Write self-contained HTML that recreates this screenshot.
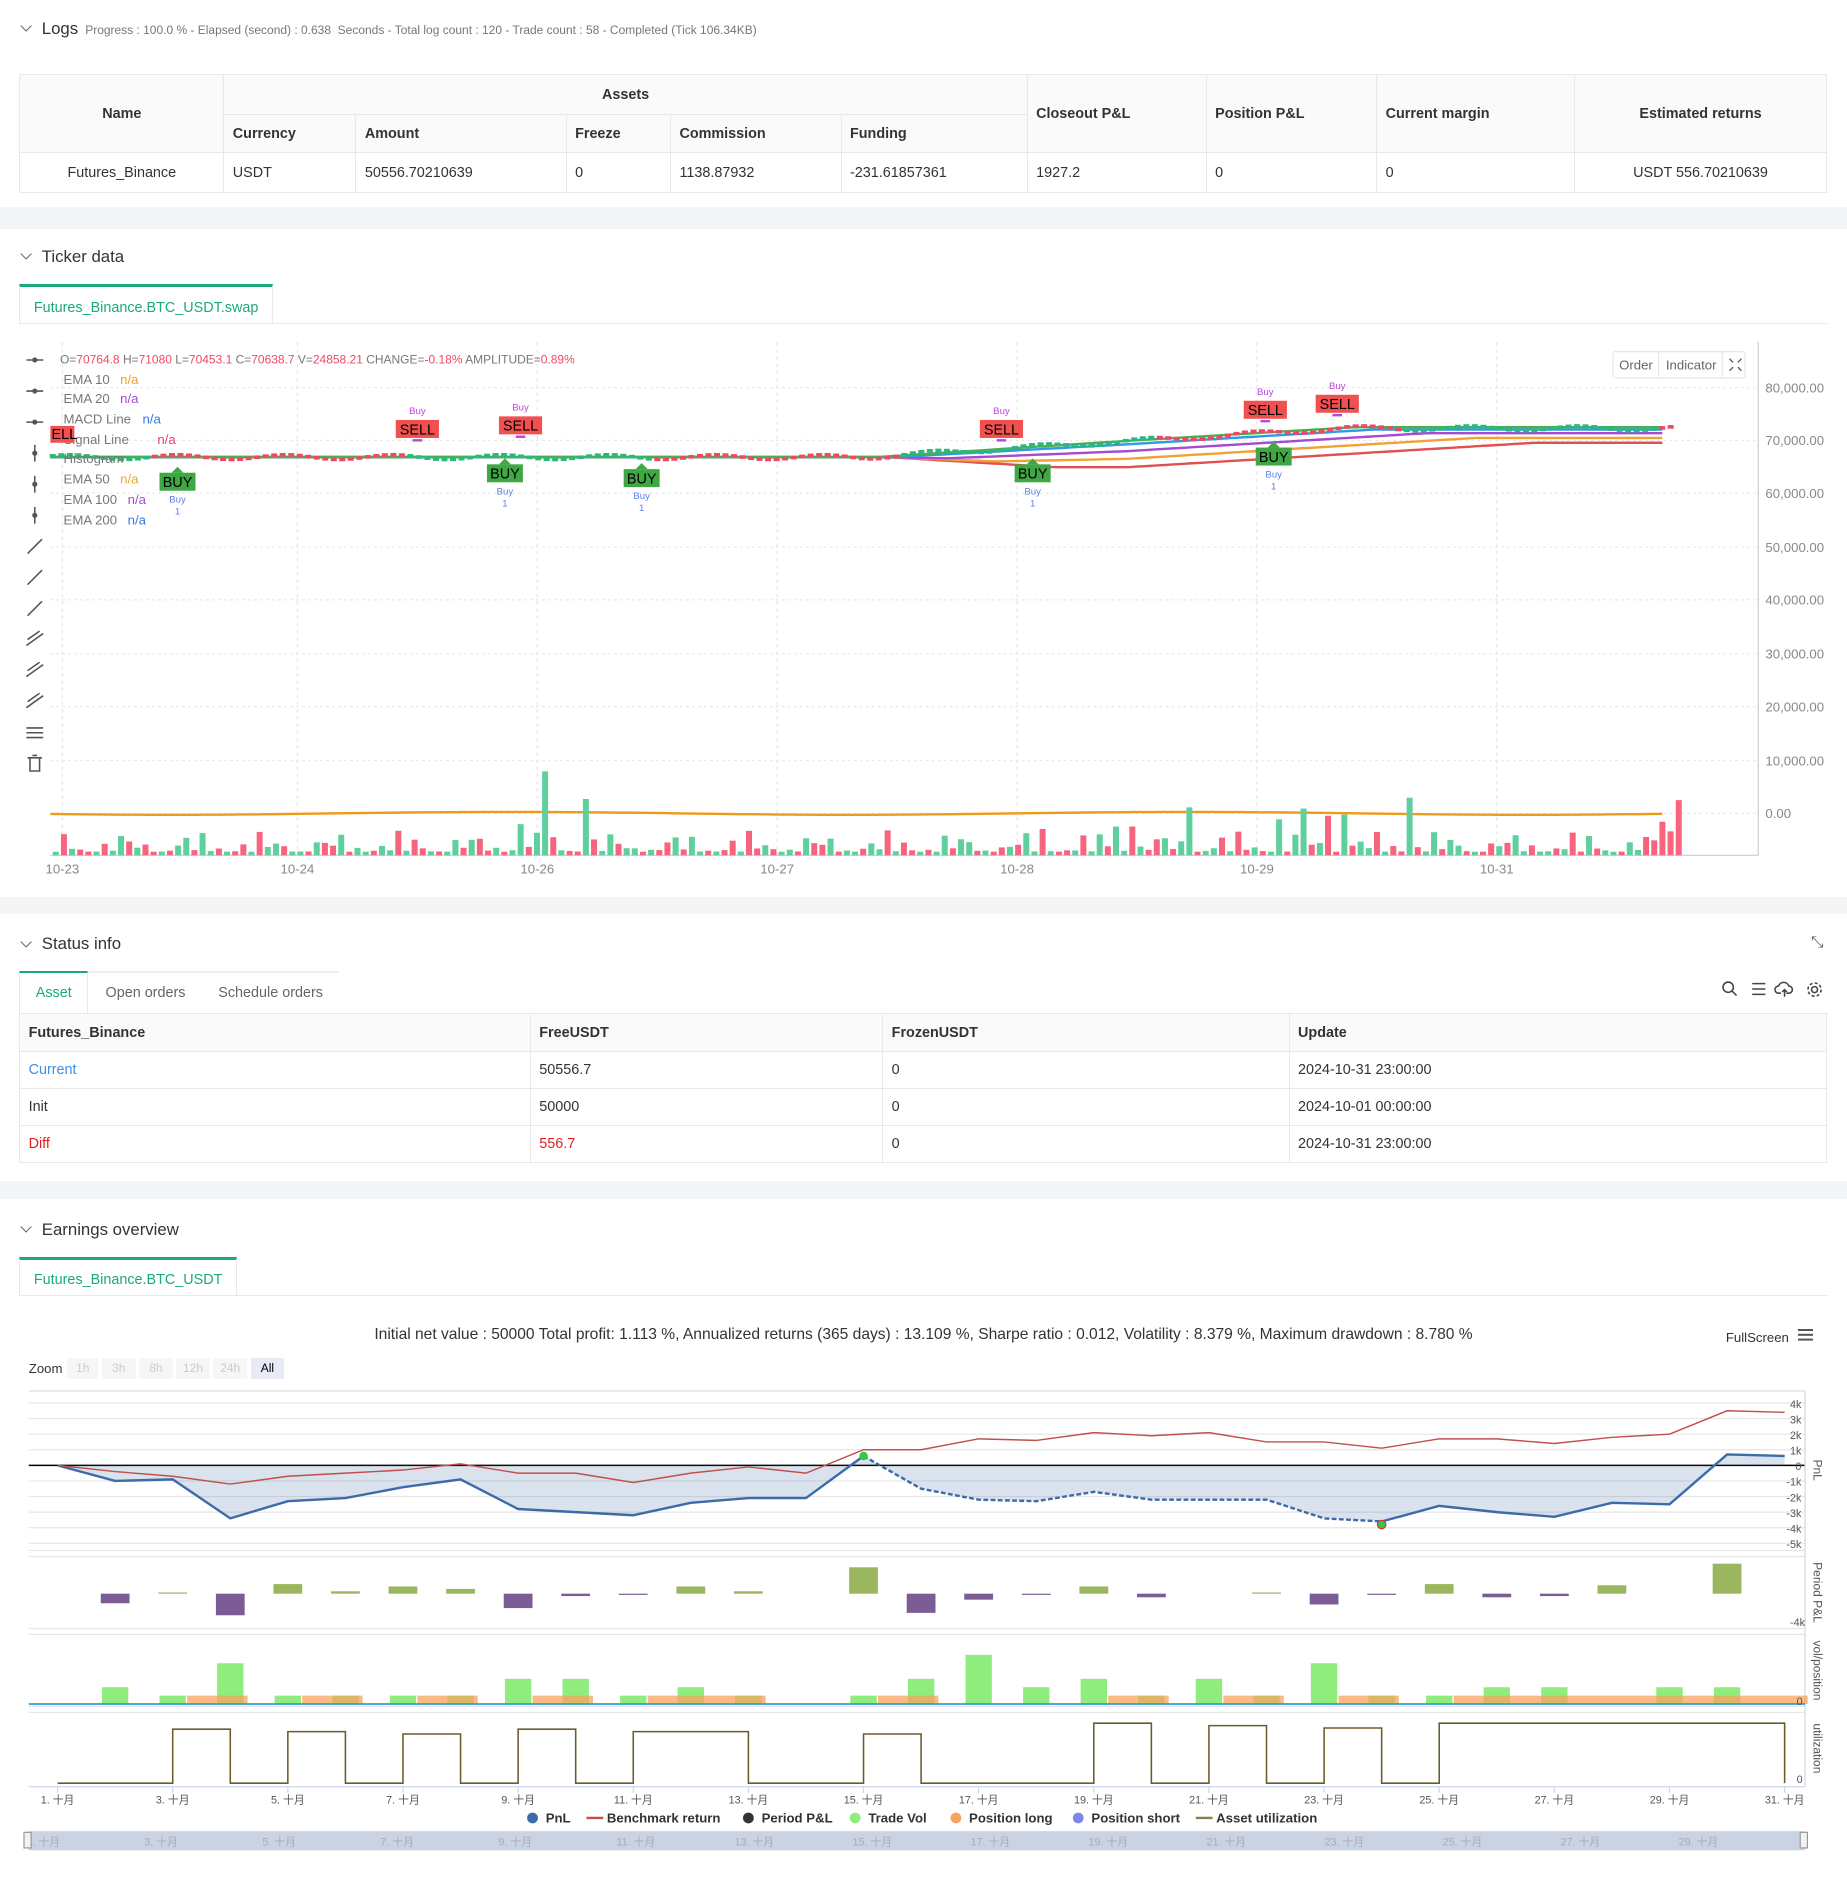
<!DOCTYPE html>
<html><head><meta charset="utf-8"><style>
html,body{margin:0;padding:0;background:#fff;overflow:hidden;width:1847px;height:1880px}
#w{position:relative;width:1540px;height:1568px;zoom:1.19935;font-family:"Liberation Sans","Noto Sans CJK SC",sans-serif;color:#333;font-size:12px}
.a{position:absolute}
.band{position:absolute;left:0;width:1540px;background:#f4f5f7}
.h{position:absolute;left:16px;font-size:14px;color:#333}
.h:before{content:"";display:inline-block;width:6px;height:6px;border-right:1.2px solid #666;border-bottom:1.2px solid #666;transform:rotate(45deg);margin:0 10px 3px 2px}
table{border-collapse:collapse;position:absolute;font-size:12px}
td,th{border:1px solid #e8e8e8;padding:0 7px;text-align:left}
th{background:#fafafa;font-weight:bold;color:#333}
.tab{position:absolute;border:1px solid #e8e8e8;border-bottom:none;border-top:3px solid #1aaa7d;color:#1aaa7d;font-size:12px;text-align:center;background:#fff}
svg text{font-family:"Liberation Sans","Noto Sans CJK SC",sans-serif}
</style></head><body><div id="w">

<div class="h" style="top:16px">Logs <span style="font-size:10px;color:#777;margin-left:2px">Progress : 100.0 % - Elapsed (second) : 0.638 &nbsp;Seconds - Total log count : 120 - Trade count : 58 - Completed (Tick 106.34KB)</span></div>
<table style="left:16px;top:62px;width:1507px">
<tr style="height:33px"><th rowspan="2" style="text-align:center;width:155px">Name</th><th colspan="5" style="text-align:center">Assets</th><th rowspan="2" style="width:134px">Closeout P&amp;L</th><th rowspan="2" style="width:127px">Position P&amp;L</th><th rowspan="2" style="width:150px">Current margin</th><th rowspan="2" style="text-align:center;width:194px">Estimated returns</th></tr>
<tr style="height:32px"><th style="width:95px">Currency</th><th style="width:160px">Amount</th><th style="width:72px">Freeze</th><th style="width:127px">Commission</th><th style="width:140px">Funding</th></tr>
<tr style="height:33px"><td style="text-align:center">Futures_Binance</td><td>USDT</td><td>50556.70210639</td><td>0</td><td>1138.87932</td><td>-231.61857361</td><td>1927.2</td><td>0</td><td>0</td><td style="text-align:center">USDT 556.70210639</td></tr>
</table>
<div class="band" style="top:173px;height:18px"></div>

<div class="h" style="top:206px">Ticker data</div>
<div class="tab" style="left:16px;top:237px;width:210px;height:31px;line-height:36px">Futures_Binance.BTC_USDT.swap</div>
<div class="a" style="left:16px;top:269px;width:1507px;border-top:1px solid #e8e8e8"></div>

<svg class="a" style="left:0;top:280px" width="1540" height="470" id="main"></svg>

<div class="band" style="top:748px;height:14px"></div>

<div class="h" style="top:779px">Status info</div>
<div class="a" style="left:1510px;top:779px;font-size:13px;color:#555">⤡</div>
<div class="a" style="left:16px;top:810px;width:267px;border-top:2px solid #eee"></div>
<div class="tab" style="left:16px;top:810px;width:56px;height:34px;line-height:34px;border-top-width:2px">Asset</div>
<div class="a" style="left:88px;top:821px;color:#666;font-size:12px">Open orders</div>
<div class="a" style="left:182px;top:821px;color:#666;font-size:12px">Schedule orders</div>
<svg class="a" style="left:1435px;top:817px" width="90" height="16" stroke="#444" fill="none" stroke-width="1.3">
<circle cx="6" cy="6" r="4.3"/><path d="M9 9l4 4"/>
<path d="M26 3h11M26 7.5h11M26 12h11"/>
<path d="M50 11h-2a3 3 0 0 1 0-6 4.5 4.5 0 0 1 8.5 0 3 3 0 0 1 0 6h-2M53 8v6M51 10l2-2 2 2"/>
<circle cx="78" cy="8" r="2.5"/><circle cx="78" cy="8" r="5.5" stroke-dasharray="2.5 1.8"/>
</svg>
<table style="left:16px;top:845px;width:1507px">
<tr style="height:31px"><th style="width:411px">Futures_Binance</th><th style="width:279px">FreeUSDT</th><th style="width:324px">FrozenUSDT</th><th>Update</th></tr>
<tr style="height:31px"><td style="color:#3d8ee8">Current</td><td>50556.7</td><td>0</td><td>2024-10-31 23:00:00</td></tr>
<tr style="height:31px"><td>Init</td><td>50000</td><td>0</td><td>2024-10-01 00:00:00</td></tr>
<tr style="height:31px"><td style="color:#e02020">Diff</td><td style="color:#e02020">556.7</td><td>0</td><td>2024-10-31 23:00:00</td></tr>
</table>
<div class="band" style="top:985px;height:15px"></div>

<div class="h" style="top:1017px">Earnings overview</div>
<div class="tab" style="left:16px;top:1048px;width:180px;height:30px;line-height:35px">Futures_Binance.BTC_USDT</div>
<div class="a" style="left:16px;top:1080px;width:1507px;border-top:1px solid #e8e8e8"></div>
<div class="a" style="left:0;width:1540px;top:1106px;text-align:center;font-size:13px;color:#333">Initial net value : 50000 Total profit: 1.113 %, Annualized returns (365 days) : 13.109 %, Sharpe ratio : 0.012, Volatility : 8.379 %, Maximum drawdown : 8.780 %</div>
<div class="a" style="left:1439px;top:1109px;font-size:11px;color:#333">FullScreen</div>
<div class="a" style="left:1499px;top:1108px;width:13px;height:2px;background:#555;box-shadow:0 4px #555,0 8px #555"></div>
<div class="a" style="left:24px;top:1135px;font-size:11px;color:#333">Zoom</div>
<div class="a" style="left:56px;top:1132px;font-size:10px;color:#ccc;display:flex;gap:3px">
<span style="background:#f6f6f6;width:26px;height:18px;line-height:18px;text-align:center">1h</span><span style="background:#f6f6f6;width:28px;height:18px;line-height:18px;text-align:center">3h</span><span style="background:#f6f6f6;width:28px;height:18px;line-height:18px;text-align:center">8h</span><span style="background:#f6f6f6;width:28px;height:18px;line-height:18px;text-align:center">12h</span><span style="background:#f6f6f6;width:28px;height:18px;line-height:18px;text-align:center">24h</span><span style="background:#e6ebf5;width:28px;height:18px;line-height:18px;text-align:center;color:#000">All</span></div>

<svg class="a" style="left:0;top:1150px" width="1540" height="418" id="earn"></svg>

</div>
<script>
var NS="http://www.w3.org/2000/svg";
function el(p,t,a,txt){var e=document.createElementNS(NS,t);for(var k in a)e.setAttribute(k,a[k]);if(txt!=null)e.textContent=txt;p.appendChild(e);return e;}
var m=document.getElementById('main');var o=280;
var ylab=[["80,000.00",323],["70,000.00",367],["60,000.00",411],["50,000.00",456],["40,000.00",500],["30,000.00",545],["20,000.00",589],["10,000.00",634],["0.00",678]];
ylab.forEach(function(l){el(m,'line',{x1:42,x2:1466,y1:l[1]-o,y2:l[1]-o,stroke:'#e6e6e6','stroke-dasharray':'2 3'});el(m,'text',{x:1472,y:l[1]-o+4,'font-size':11,fill:'#888'},l[0]);});
var xl=[["10-23",52],["10-24",248],["10-26",448],["10-27",648],["10-28",848],["10-29",1048],["10-31",1248]];
xl.forEach(function(l){el(m,'line',{x1:l[1],x2:l[1],y1:5,y2:433,stroke:'#e6e6e6','stroke-dasharray':'3 3'});el(m,'text',{x:l[1],y:724-o+4,'font-size':11,fill:'#888','text-anchor':'middle'},l[0]);});
el(m,'line',{x1:1466,x2:1466,y1:5,y2:433,stroke:'#ccc'});
el(m,'line',{x1:42,x2:1466,y1:433,y2:433,stroke:'#ccc'});
for(var i=0;i<14;i++){var y=300+i*25.9-o;var g=el(m,'g',{stroke:'#555','stroke-width':1.3,fill:'#555'});
 if(i<3){el(g,'line',{x1:22,x2:36,y1:y,y2:y});el(g,'circle',{cx:29,cy:y,r:1.5});}
 else if(i<6){el(g,'line',{x1:29,x2:29,y1:y-7,y2:y+7});el(g,'circle',{cx:29,cy:y,r:1.5});}
 else if(i<9){el(g,'line',{x1:23,x2:35,y1:y+6,y2:y-6});}
 else if(i<12){el(g,'line',{x1:22,x2:36,y1:y+5,y2:y-5});el(g,'line',{x1:23,x2:33,y1:y,y2:y-7});}
 else if(i==12){el(g,'path',{d:'M22 '+(y-4)+'h14M22 '+y+'h14M22 '+(y+4)+'h14',fill:'none'});}
 else {el(g,'path',{d:'M23 '+(y-5)+'h12M25 '+(y-5)+'v11h8v-11M27 '+(y-7)+'h4',fill:'none'});}
}
function py(x){if(x<720)return 381;if(x<1120)return 381-(x-720)/400*24*(1-0.3*Math.sin((x-720)/400*Math.PI)*0);return 357;}
var emas=[['#e05050',160,12],['#f2a134',110,8],['#a64bd0',70,4],['#2c9ae8',25,1],['#4cae4c',10,-1]];
emas.forEach(function(e){var d='';for(var x=42;x<=1390;x+=6){var yy=py(Math.max(42,x-e[1]));if(x>740)yy+=e[2]*Math.min(1,(x-740)/200);d+=(x==42?'M':'L')+x+' '+(yy-o).toFixed(1);}el(m,'path',{d:d,stroke:e[0],fill:'none','stroke-width':2});});
for(var x=44;x<1400;x+=7.1){var yy=py(x)-o+Math.sin(x*1.7)*2;var up=Math.sin(x*0.9)>0;el(m,'rect',{x:x-2.5,y:yy-1.5,width:5,height:3,fill:up?'#26b980':'#f04864'});}
var d='';for(var x=42;x<=1390;x+=8){d+=(x==42?'M':'L')+x+' '+(678-o+Math.sin(x/90)*1.2).toFixed(1);}el(m,'path',{d:d,stroke:'#f09a1a',fill:'none','stroke-width':2});
for(var i=0;i<=199;i++){var x=44+i*6.8;var s=Math.abs(Math.sin(i*1.31)*Math.cos(i*0.37));var h=3+s*s*18;
 if(i==60)h=70;if(i==65)h=47;if(i==166)h=48;if(i==139)h=40;if(i==199)h=46;if(i==197)h=28;if(i==198)h=20;if(i==150||i==153||i==156)h=30+i%5*3;if(i==158)h=34;if(i==130||i==132)h=24;if(i==121)h=22;if(i==57)h=26;
 var red=Math.sin(i*2.3)>0.1;if(i>=196)red=true;el(m,'rect',{x:x,y:433-h,width:5,height:h,fill:red?'#f7647e':'#5fcf9e'});}
el(m,'text',{x:50,y:303-o,'font-size':10,fill:'#777'}).innerHTML='O=<tspan fill="#f04864">70764.8</tspan> H=<tspan fill="#f04864">71080</tspan> L=<tspan fill="#f04864">70453.1</tspan> C=<tspan fill="#f04864">70638.7</tspan> V=<tspan fill="#f04864">24858.21</tspan> CHANGE=<tspan fill="#f04864">-0.18%</tspan> AMPLITUDE=<tspan fill="#f04864">0.89%</tspan>';
var leg=[["EMA 10","#f2a134",316],["EMA 20","#a64bd0",332],["MACD Line","#2c7ae8",349],["Signal Line","#e8407a",366],["Histogram","",382],["EMA 50","#f2a134",399],["EMA 100","#a64bd0",416],["EMA 200","#2c7ae8",433]];
leg.forEach(function(l){el(m,'text',{x:53,y:l[2]-o+4,'font-size':11,fill:'#777'},l[0]);if(l[1])el(m,'text',{x:53+l[0].length*6.2+10,y:l[2]-o+4,'font-size':11,fill:l[1]},'n/a');});
function sell(x,y){el(m,'text',{x:x,y:y-13-o,'font-size':8,fill:'#c040e0','text-anchor':'middle'},'Buy');el(m,'rect',{x:x-18,y:y-8-o,width:36,height:15,fill:'#f05050'});el(m,'text',{x:x,y:y+4-o,'font-size':12,fill:'#000','text-anchor':'middle'},'SELL');el(m,'rect',{x:x-4,y:y+8-o,width:8,height:2,fill:'#c040e0'});}
function buy(x,y){el(m,'path',{d:'M'+(x-5)+' '+(y-8-o)+'l5-5 5 5z',fill:'#3fa845'});el(m,'rect',{x:x-15,y:y-8-o,width:30,height:15,fill:'#3fa845'});el(m,'text',{x:x,y:y+4-o,'font-size':12,fill:'#000','text-anchor':'middle'},'BUY');el(m,'text',{x:x,y:y+17-o,'font-size':8,fill:'#5c7ee8','text-anchor':'middle'},'Buy');el(m,'text',{x:x,y:y+27-o,'font-size':8,fill:'#5c7ee8','text-anchor':'middle'},'1');}
sell(348,358);sell(434,355);sell(835,358);sell(1055,342);sell(1115,337);
el(m,'rect',{x:42,y:355-o,width:20,height:14,fill:'#f05050'});el(m,'text',{x:43,y:366-o,'font-size':12,fill:'#000'},'ELL');
buy(148,402);buy(421,395);buy(535,399);buy(861,395);buy(1062,381);
el(m,'rect',{x:1345,y:293-o,width:110,height:22,fill:'#fff',stroke:'#e6e6e6',rx:2});
el(m,'text',{x:1350,y:308-o,'font-size':11,fill:'#666'},'Order');el(m,'line',{x1:1383,x2:1383,y1:293-o,y2:315-o,stroke:'#e6e6e6'});
el(m,'text',{x:1389,y:308-o,'font-size':11,fill:'#666'},'Indicator');el(m,'line',{x1:1436,x2:1436,y1:293-o,y2:315-o,stroke:'#e6e6e6'});
el(m,'path',{d:'M1442 '+(299-o)+'l3 3M1452 '+(299-o)+'l-3 3M1442 '+(309-o)+'l3-3M1452 '+(309-o)+'l-3-3',stroke:'#666','stroke-width':1.2});

var e=document.getElementById('earn');var oe=1150;
function X(i){return 48+48*i;}
function Y(v){return 1222-13*v-oe;}
for(var k=4;k>=-5;k--){var y=Y(k);el(e,'line',{x1:24,x2:1505,y1:y,y2:y,stroke:k==0?'#000':'#e6e6e6','stroke-width':k==0?1.2:1});el(e,'text',{x:1502,y:y+4,'font-size':9,fill:'#555','text-anchor':'end'},k==0?'0':k+'k');}
el(e,'line',{x1:24,x2:1505,y1:1160-oe,y2:1160-oe,stroke:'#ddd'});
[1293,1298,1358,1363,1423,1428,1490].forEach(function(y){el(e,'line',{x1:24,x2:1505,y1:y-oe,y2:y-oe,stroke:y==1490?'#ccd6eb':'#e6e6e6'});});
el(e,'line',{x1:1505,x2:1505,y1:1160-oe,y2:1490-oe,stroke:'#ccd6eb'});
var b=[0,-1,-0.9,-3.4,-2.3,-2.1,-1.4,-0.9,-2.8,-3.0,-3.2,-2.4,-2.1,-2.1,0.6,-1.5,-2.2,-2.3,-1.7,-2.2,-2.2,-2.2,-3.4,-3.6,-2.6,-3.0,-3.3,-2.4,-2.5,0.7,0.6];
var r=[0,-0.4,-0.7,-1.2,-0.7,-0.5,-0.3,0.1,-0.5,-0.5,-1.1,-0.5,-0.1,-0.5,1.0,1.0,1.7,1.6,2.1,1.9,2.1,1.5,1.5,1.1,1.7,1.7,1.4,1.8,2.0,3.5,3.4];
var area='M'+X(0)+' '+Y(0);b.forEach(function(v,i){area+='L'+X(i)+' '+Y(v);});area+='L'+X(30)+' '+Y(0)+'Z';
el(e,'path',{d:area,fill:'rgba(70,110,170,0.2)'});
var d1='',d2='',d3='';b.forEach(function(v,i){var p=X(i)+' '+Y(v);if(i<=14)d1+=(i?'L':'M')+p;if(i>=14&&i<=23)d2+=(i>14?'L':'M')+p;if(i>=23)d3+=(i>23?'L':'M')+p;});
el(e,'path',{d:d1+d3,stroke:'#3d6aa8',fill:'none','stroke-width':2});
el(e,'path',{d:d2,stroke:'#3d6aa8',fill:'none','stroke-width':2,'stroke-dasharray':'4 2'});
var dr='';r.forEach(function(v,i){dr+=(i?'L':'M')+X(i)+' '+Y(v);});el(e,'path',{d:dr,stroke:'#c0504d',fill:'none','stroke-width':1.2});
el(e,'circle',{cx:X(14),cy:Y(0.6),r:3.5,fill:'#2ecc40'});el(e,'circle',{cx:X(23),cy:Y(-3.8),r:3.5,fill:'#2ecc40',stroke:'#e03030'});
var pp={1:-8,2:1,3:-18,4:8,5:2,6:6,7:4,8:-12,9:-2,10:-1,11:6,12:2,14:22,15:-16,16:-5,17:-1,18:6,19:-3,21:1,22:-9,23:-1,24:8,25:-3,26:-2,27:7,29:25};
var z=1329-oe;for(var i in pp){var v=pp[i];el(e,'rect',{x:X(+i)-12,y:v>0?z-v:z,width:24,height:Math.abs(v),fill:v>0?'#9ab65e':'#7b5c94'});}
el(e,'text',{x:1505,y:1356-oe,'font-size':9,fill:'#555','text-anchor':'end'},'-4k');
var base=1421-oe;
var ls=[[2.25,3.3],[4.25,5.3],[6.25,7.3],[8.25,9.3],[10.25,12.3],[14.25,15.3],[18.25,19.3],[20.25,21.3],[22.25,23.3],[24.25,30.4]];
var tv={1:14,2:7,3:34,4:7,5:7,6:7,7:7,8:21,9:21,10:7,11:14,12:7,14:7,15:21,16:41,17:14,18:21,19:7,20:21,21:7,22:34,23:7,24:7,25:14,26:14,28:14,29:14};
for(var i in tv)el(e,'rect',{x:X(+i)-11,y:base-tv[i],width:22,height:tv[i],fill:'#90ed7d'});
ls.forEach(function(s){el(e,'rect',{x:X(s[0]),y:base-7,width:(s[1]-s[0])*48,height:7,fill:'rgba(247,163,92,0.75)'});});
el(e,'line',{x1:24,x2:1505,y1:base,y2:base,stroke:'#2b9fd8','stroke-width':1.5});
el(e,'text',{x:1503,y:base+1,'font-size':9,fill:'#555','text-anchor':'end'},'0');
var ub=1487-oe,uh=1442-oe;var du='M'+X(0)+' '+ub;
ls.forEach(function(s,k){var a=Math.round(s[0]),c=Math.round(s[1]);var hh=uh+(k%3)*2-(k>5?5:0);du+='L'+X(a)+' '+ub+'L'+X(a)+' '+hh+'L'+X(c)+' '+hh+'L'+X(c)+' '+ub;});
el(e,'path',{d:du,stroke:'#6b5d2a',fill:'none','stroke-width':1.3});
el(e,'text',{x:1503,y:ub,'font-size':9,fill:'#555','text-anchor':'end'},'0');
[["PnL",1226],["Period P&L",1328],["vol/position",1393],["utilization",1458]].forEach(function(l){el(e,'text',{x:1512,y:l[1]-oe,'font-size':10,fill:'#555','text-anchor':'middle',transform:'rotate(90 1512 '+(l[1]-oe)+')'},l[0]);});
for(var i=0;i<=30;i+=2){el(e,'line',{x1:X(i),x2:X(i),y1:1490-oe,y2:1495-oe,stroke:'#ccd6eb'});el(e,'text',{x:X(i),y:1504-oe,'font-size':9,fill:'#555','text-anchor':'middle'},(i+1)+'. 十月');}
var lg=[["PnL","#3d6aa8",'c',440],["Benchmark return","#c0504d",'l',491],["Period P&L","#333",'c',620],["Trade Vol","#90ed7d",'c',709],["Position long","#f7a35c",'c',793],["Position short","#8085e9",'c',895],["Asset utilization","#8b7d4a",'l',999]];
lg.forEach(function(l){if(l[2]=='c')el(e,'circle',{cx:l[3]+4,cy:1516-oe,r:4.5,fill:l[1]});else el(e,'line',{x1:l[3]-2,x2:l[3]+12,y1:1516-oe,y2:1516-oe,stroke:l[1],'stroke-width':2});el(e,'text',{x:l[3]+15,y:1520-oe,'font-size':11,fill:'#333','font-weight':'bold'},l[0]);});
el(e,'rect',{x:24,y:1527-oe,width:1481,height:16,fill:'#c9d3e3'});
for(var i=0;i<15;i++)el(e,'text',{x:X(i*2)-26+i*2.4,y:1539-oe,'font-size':9,fill:'#aab'},(i*2+1)+'. 十月');
el(e,'rect',{x:20,y:1528-oe,width:6,height:13,fill:'#f2f2f2',stroke:'#999'});el(e,'rect',{x:1501,y:1528-oe,width:6,height:13,fill:'#f2f2f2',stroke:'#999'});
</script>
</body></html>
